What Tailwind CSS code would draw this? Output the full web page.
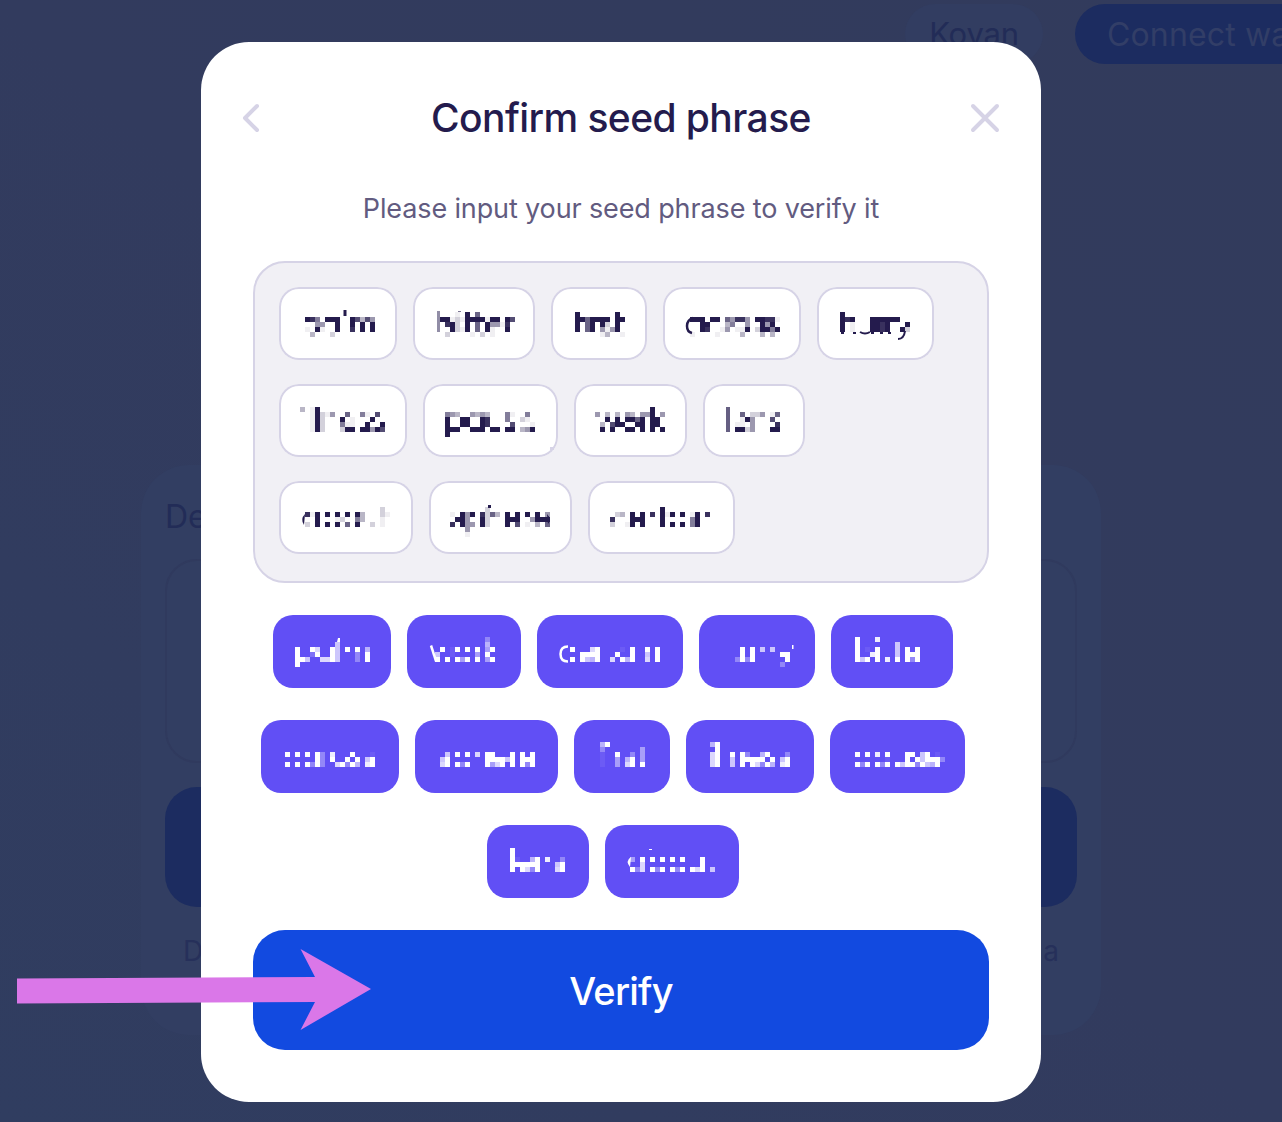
<!DOCTYPE html>
<html lang="en">
<head>
<meta charset="utf-8">
<title>Confirm seed phrase</title>
<script src="https://cdn.jsdelivr.net/npm/@tailwindcss/browser@4"></script>
</head>
<body class="relative h-[1122px] w-[1282px] overflow-hidden bg-[#323b5e] bg-gradient-to-tr from-[#303d60] via-[#323b5e] to-[#323b5c] font-['Inter',sans-serif]">

<!-- Dimmed page behind the dialog -->
<div class="absolute inset-0 overflow-hidden" aria-hidden="true">
  <header class="flex h-[465px] items-start gap-8 pt-1 pl-[905px]">
    <div class="flex h-[60px] w-[138px] shrink-0 items-center justify-center rounded-full bg-[#323d61] text-[31px] tracking-[-0.2px] text-[#222c57]">Kovan</div>
    <div class="flex h-[60px] w-[300px] shrink-0 items-center rounded-full bg-[#1c2c60] pt-0.5 pl-8 text-[32px] tracking-[0.15px] whitespace-nowrap text-[#323e67]">Connect wallet</div>
  </header>
  <section class="ml-[141px] flex h-[570px] w-[960px] flex-col rounded-[48px] bg-[#323e62] px-6 pt-7">
    <div class="h-[66px] pt-px text-[32px] leading-[46px] text-[#222c57]">De</div>
    <div class="h-[204px] rounded-[32px] border-2 border-[#303a5e]"></div>
    <div class="mt-6 h-[120px] rounded-[32px] bg-[#1c2c60]"></div>
    <div class="mt-6 flex justify-between px-[18px] text-[28px] leading-[40px] text-[#26305a]"><span>D</span><span>a</span></div>
  </section>
</div>

<!-- Dialog -->
<main class="relative mt-[42px] ml-[201px] flex h-[1060px] w-[840px] flex-col rounded-[48px] bg-white px-[52px]">
  <div class="-mx-3 mt-12 flex h-14 items-center justify-between">
    <svg class="h-[30px] w-5" viewBox="0 0 20 30" fill="none" stroke="#d6d3e6" stroke-width="4" stroke-linecap="round" stroke-linejoin="round"><path d="M16 3 4 15l12 12"/></svg>
    <h1 class="ml-3 text-[39px] font-medium tracking-[-0.58px] whitespace-nowrap text-[#241b4d]">Confirm seed phrase</h1>
    <svg class="h-8 w-8" viewBox="0 0 32 32" fill="none" stroke="#d6d3e6" stroke-width="4" stroke-linecap="round"><path d="M4 4l24 24M28 4 4 28"/></svg>
  </div>
  <p class="mt-[43px] text-center text-[27px] leading-10 tracking-[-0.13px] whitespace-nowrap text-[#625b80]">Please input your seed phrase to verify it</p>
  <div id="chosen" class="mt-8 flex h-[322px] shrink-0 flex-col gap-6 rounded-[32px] border-2 border-[#d6d3e6] bg-[#f1f0f5] p-6"></div>
  <div id="words" class="mt-8 flex flex-col items-center gap-8 pr-4"></div>
  <button class="mt-8 h-[120px] shrink-0 rounded-[32px] bg-[#124ae0] pt-0.5 text-[38px] font-medium tracking-[-0.8px] text-white">Verify</button>
</main>

<!-- Pointer arrow -->
<svg class="absolute top-[940px] left-0 h-[100px] w-[400px]" viewBox="0 940 400 100"><path fill="#da77e8" d="M17 978.5 315 977 300.500 949 371 989 300.500 1030 315 1002 17 1003.500z"/></svg>

<script>
// Each redacted word: [chip width, mosaic x, mosaic y, rows of 5px cells with strength 1-9, extra shapes]
const chosen = [
  [287, 279, [
    [118,305,317,["985.999..97374","..44..9..9.9.9","1.91..9..8.9.9",".3...2"],'<path d="M343.500 310h3v6h-3z"/>'],
    [122,440,312,["...1.9.6","991219999199.97",".892.9.6.94418.","..9219.6.91..9.",".2....1.2.1"],'<path opacity=".5" d="M437 311h3v21h-3z"/><path opacity=".6" d="M458 311h3v1h-3z"/>'],
    [96,575,312,["9.......9","9969999.99","9.69.92.9","9.69.4149",".....13..1"],''],
    [138,690,317,["999.99.64884.99881","..99...35..4..949.","..98..14.119.29959","1....1....3...3.3."],'<path fill="none" stroke="currentColor" stroke-width="2.500" d="M693 318q-6 2-6 8t5 7"/>'],
    [117,840,312,["9","989...999999..","9.1...9989...9","9.1...9989..92"],'<path d="M841 332h3v2h-3zM853 332h3v2h-3zM871 332h3v2h-3zM880 332h3v2h-3zM888 332h3v2h-3z"/><path fill="none" stroke="currentColor" stroke-width="2" d="M860 332q5 3 10 0M905 331q-1 8-7 8"/>']
  ]],
  [384, 279, [
    [128,300,407,["3.19","..19214..6..51.7.","..192...9.1...9..","..192...511..9..9","..192...299.99497"],''],
    [135,445,412,["543..4343...51..5.","9..99..98...5..21.","9..99..98....7...1","999..999.99.99.349","9"],'<path fill="#d6d3e6" d="M550 447h4v3h-4z"/>'],
    [113,595,407,["...........9","4.3.3.43.449.4","..9.9.9969.99",".3.799..99.99",".9.9..99.9.9.9"],''],
    [102,735,412,[".6.224.16",".194...7.","11.4....8","9924...99"],'<path opacity=".7" d="M726 407h4v25h-4z"/>']
  ]],
  [481, 279, [
    [134,305,507,["...............2","819.9.9.9.93...21","..9...12..53...1.","2.9.9.9.6.9..2.1."],'<path d="M305 514q-5 5-1 11z"/>'],
    [143,450,507,[".......2","1.949.8263.9.9.9.9.4",".994..92...999..4999","8.944.92...9.7.1.3.6","...4","...1"],'<path d="M488 505h3v3h-3zM547 514q5 5 1 10z"/>'],
    [147,610,507,["..........9",".23.9.9.8.919.9.19.8","8...999...9.....59..","2..19.9...9.9.9.59.."],'']
  ]]
];
const words = [
  [615, 273, [
    [118,295,642,["........6","9..97..96.9.9.5","9..29..96...3.9","996..7796...3.9","9"],'<path d="M338 638h2v4h-3z"/>'],
    [114,435,637,["..........3","..........5",".9.19.9.9.49","6..1....4.9.","9.9.949.9.49"],'<path fill="none" stroke="currentColor" stroke-width="2.500" d="M431 645.500 436 661"/>'],
    [146,570,647,["9...79....1.9..9.9","..9999...9..9..6.9","9.9659..7.959..7.9"],'<path fill="none" stroke="currentColor" stroke-width="2.500" d="M568 646.500q-7.500 0-7.500 7.500t7.500 7.500"/>'],
    [116,735,647,[".9.9.6.6",".9.9.....99","3939......9",".........3"],'<path d="M792 645h1.500v4H792z"/>'],
    [122,855,637,["9...8","9.......6","9.1.9...6.9.9","9..89...6.999","969.9.8.9.939"],'']
  ]],
  [720, 261, [
    [138,285,752,["9.9.9.93.8...9...1","......93.9..9.9.69","9.9.9393..79395.89"],''],
    [143,440,752,[".6.9.9.7.99...9.9.9","69.......999969.999","79.939...9479.9.939"],''],
    [96,600,742,["59","3.......4","1..9..3.4","1..4.59.4","1..4.79.9"],''],
    [128,710,742,["59",".9","79..9.93..59...3","79..6.99999.9.69","79..6.9.97395.89"],''],
    [135,855,752,["9.9.8.9...99.69.1.","......1...9.969993","939.939.969939659."],'']
  ]],
  [825, 487, [
    [102,510,857,["91..59.8..3","999999...69","9.9739...79"],'<path d="M510 848h5v9h-5z"/>'],
    [134,630,857,["4.9.9.9.9.9...9..","..7...........9..","937.939.939.979.6"],'<path d="M649 849h3v1h-3zM631 857q-6 4-1 10z"/>']
  ]]
];
function build(id, rows, chipClass) {
  document.getElementById(id).innerHTML = rows.map(([top, left, chips]) => {
    let x = left;
    return '<div class="flex gap-4">' + chips.map(([w, mx, my, cells, extra]) => {
      let s = '';
      cells.forEach((row, j) => [...row].forEach((c, i) => {
        if (c !== '.') s += `<rect x="${mx + i * 5}" y="${my + j * 5}" width="5" height="5" opacity="${[0,.07,.2,.32,.45,.57,.68,.78,.9,1][c]}"/>`;
      }));
      const out = `<div class="${chipClass}" style="width:${w}px"><svg class="block h-full w-full" viewBox="${x} ${top} ${w} 73" fill="currentColor">${s}${extra}</svg></div>`;
      x += w + 16;
      return out;
    }).join('') + '</div>';
  }).join('');
}
build('chosen', chosen, 'h-[73px] shrink-0 rounded-[20px] bg-white text-[#241b4d] inset-ring-2 inset-ring-[#d6d3e6]');
build('words', words, 'h-[73px] shrink-0 rounded-[20px] bg-[#614ff5] text-white');
</script>
</body>
</html>
